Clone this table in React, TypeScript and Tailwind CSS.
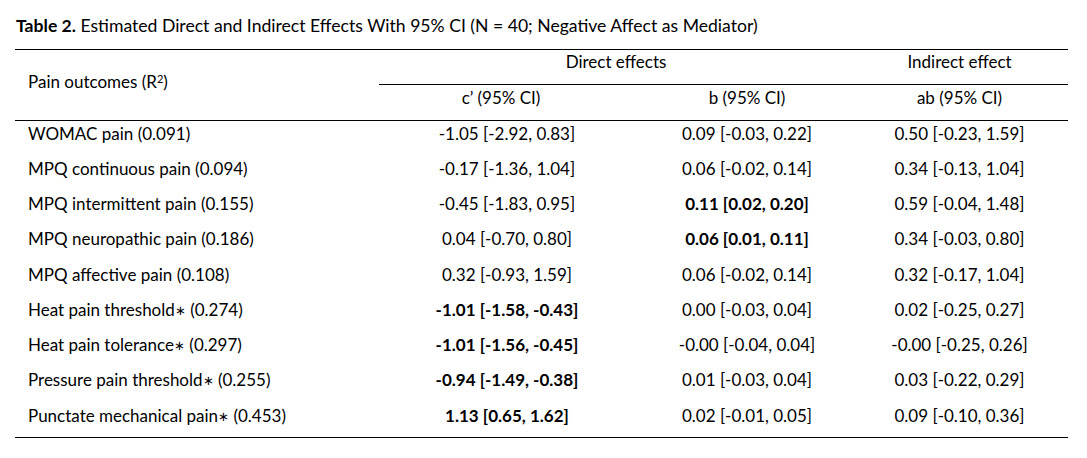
import React from "react";

type Row = {
  label: string;
  star?: boolean;
  r2: string;
  c: string;
  cBold?: boolean;
  b: string;
  bBold?: boolean;
  ab: string;
};

const rows: Row[] = [
  { label: "WOMAC pain", r2: "0.091", c: "-1.05 [-2.92, 0.83]", b: "0.09 [-0.03, 0.22]", ab: "0.50 [-0.23, 1.59]" },
  { label: "MPQ continuous pain", r2: "0.094", c: "-0.17 [-1.36, 1.04]", b: "0.06 [-0.02, 0.14]", ab: "0.34 [-0.13, 1.04]" },
  { label: "MPQ intermittent pain", r2: "0.155", c: "-0.45 [-1.83, 0.95]", b: "0.11 [0.02, 0.20]", bBold: true, ab: "0.59 [-0.04, 1.48]" },
  { label: "MPQ neuropathic pain", r2: "0.186", c: "0.04 [-0.70, 0.80]", b: "0.06 [0.01, 0.11]", bBold: true, ab: "0.34 [-0.03, 0.80]" },
  { label: "MPQ affective pain", r2: "0.108", c: "0.32 [-0.93, 1.59]", b: "0.06 [-0.02, 0.14]", ab: "0.32 [-0.17, 1.04]" },
  { label: "Heat pain threshold", star: true, r2: "0.274", c: "-1.01 [-1.58, -0.43]", cBold: true, b: "0.00 [-0.03, 0.04]", ab: "0.02 [-0.25, 0.27]" },
  { label: "Heat pain tolerance", star: true, r2: "0.297", c: "-1.01 [-1.56, -0.45]", cBold: true, b: "-0.00 [-0.04, 0.04]", ab: "-0.00 [-0.25, 0.26]" },
  { label: "Pressure pain threshold", star: true, r2: "0.255", c: "-0.94 [-1.49, -0.38]", cBold: true, b: "0.01 [-0.03, 0.04]", ab: "0.03 [-0.22, 0.29]" },
  { label: "Punctate mechanical pain", star: true, r2: "0.453", c: "1.13 [0.65, 1.62]", cBold: true, b: "0.02 [-0.01, 0.05]", ab: "0.09 [-0.10, 0.36]" },
];

export default function App() {
  return (
    <div className="w-[1087px] h-[458px] bg-white text-black font-['Lato','Liberation_Sans',sans-serif] text-[17px] leading-[22px] pl-[15px] pt-[15px]">
      {/* Title */}
      <div className="pl-px h-[34px] text-[17.6px]">
        <span className="font-bold">Table 2.</span> Estimated Direct and Indirect Effects With 95% CI (N = 40; Negative Affect as Mediator)
      </div>

      <table className="w-[1053px] border-collapse table-fixed">
        <colgroup>
          <col className="w-[364px]" />
          <col className="w-[244px]" />
          <col className="w-[248px]" />
          <col className="w-[197px]" />
        </colgroup>
        <thead>
          <tr className="border-t border-black">
            <td rowSpan={2} className="align-top pl-[13px] pt-[21px] border-b border-black">
              Pain outcomes (R<sup className="text-[11px]">2</sup>)
            </td>
            <td colSpan={2} className="text-center h-[35px] align-top pt-[1px] pr-[18px] border-b border-black">
              Direct effects
            </td>
            <td className="text-center align-top pt-[1px] pr-[20px] border-b border-black">Indirect effect</td>
          </tr>
          <tr className="border-b border-black">
            <td className="text-center h-[36px] align-top pt-[2px]">c’ (95% CI)</td>
            <td className="text-center align-top pt-[2px]">b (95% CI)</td>
            <td className="text-center align-top pt-[2px] pr-[20px]">ab (95% CI)</td>
          </tr>
        </thead>
        <tbody className="border-b border-black">
          {rows.map((r) => (
            <tr key={r.label} className="h-[35.25px]">
              <td className="align-top pl-[13px] pt-[2px]">
                {r.label}
                {r.star && <span className="text-[13px] align-[1px]">∗</span>} ({r.r2})
              </td>
              <td className={`text-center align-top pt-[2px] pl-[12px] ${r.cBold ? "font-bold" : ""}`}>{r.c}</td>
              <td className={`text-center align-top pt-[2px] ${r.bBold ? "font-bold" : ""}`}>{r.b}</td>
              <td className="text-center align-top pt-[2px] pr-[20px]">{r.ab}</td>
            </tr>
          ))}
        </tbody>
      </table>
    </div>
  );
}
